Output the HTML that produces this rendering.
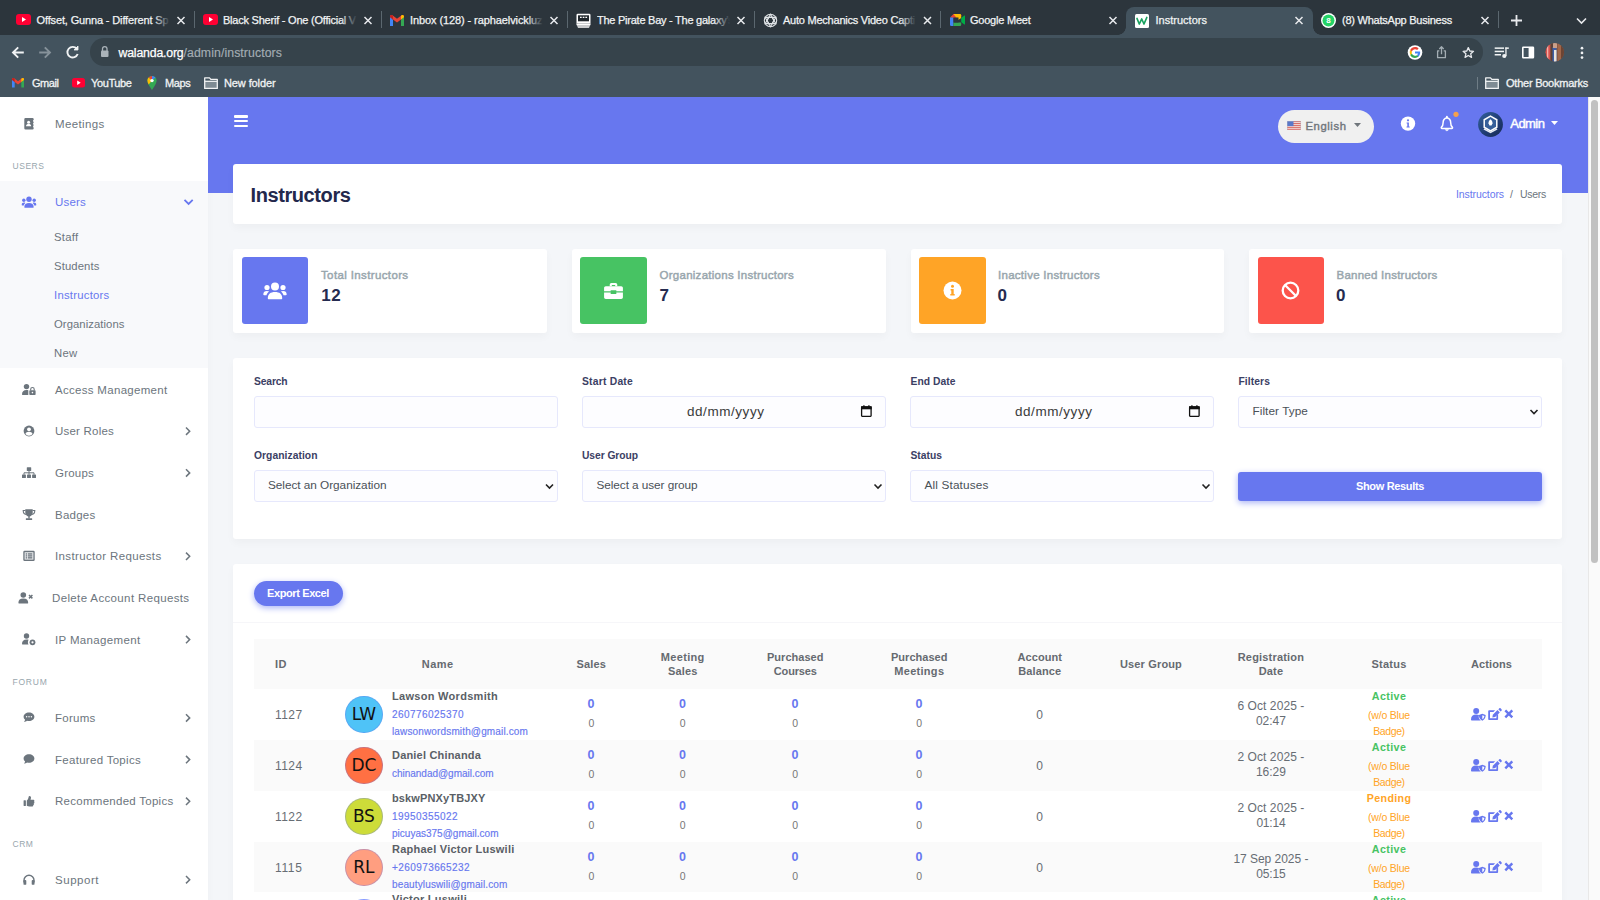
<!DOCTYPE html>
<html lang="en">
<head>
<meta charset="utf-8">
<title>Instructors</title>
<style>
*{box-sizing:border-box;margin:0;padding:0}
html,body{width:1600px;height:900px;overflow:hidden;background:#f4f6f9;font-family:"Liberation Sans",Arial,sans-serif;color:#6c757d}
.abs,.abs *{position:absolute}
#root{position:relative;width:1600px;height:900px;overflow:hidden}
.t{position:absolute;white-space:nowrap;line-height:1}
/* ===== browser chrome ===== */
#tabstrip{left:0;top:0;width:1600px;height:35px;background:#2c353c}
#toolbar{left:0;top:35px;width:1600px;height:62px;background:#43535e}
#omni{left:90px;top:38px;width:1393px;height:28px;border-radius:14px;background:#36434b}
.tabt{font-size:11px;color:#f1f3f4;top:15px;-webkit-text-stroke:.25px #f1f3f4}
.bm{font-size:11px;color:#f1f3f4;top:78px;-webkit-text-stroke:.3px #f1f3f4}
.sep{top:11px;width:1px;height:17px;background:#5b676f}
/* ===== page ===== */
#sidebar{left:0;top:97px;width:208px;height:803px;background:#fff;box-shadow:0 4px 8px rgba(0,0,0,.03)}
#sbactive{left:0;top:181px;width:208px;height:187px;background:#f8f9fb}
#hero{left:208px;top:97px;width:1380px;height:96px;background:#6777ef}
#sbar{left:1588px;top:97px;width:12px;height:803px;background:#fafafa;border-left:1px solid #e8e8e8}
#thumb{left:1591px;top:100px;width:7px;height:463px;border-radius:4px;background:#c1c1c1}
.card{background:#fff;border-radius:3px;box-shadow:0 4px 8px rgba(0,0,0,.03)}
.mi{font-size:11.500px;color:#6c757d;margin-top:1.200px}
.sh{font-size:8.5px;letter-spacing:1.3px;color:#98a6ad;font-weight:400}
.sub{font-size:11.300px;color:#6c757d;margin-top:1.200px}
.sb6{font-weight:400;-webkit-text-stroke:.35px currentColor}
.sl{font-size:11.5px;font-weight:400;color:#98a6ad;-webkit-text-stroke:.45px #98a6ad}
.fl{font-size:10.300px;font-weight:700;color:#3b4064;margin-top:1.200px}
.inp{width:304px;height:31.500px;border:1px solid #e6e8fc;border-radius:3px;background:#fdfdff}
.dt{font-size:13.500px;color:#3a3a3a}
.st{font-size:11.800px;color:#495057;margin-top:.600px}
.th{font-size:11px;font-weight:700;color:#666a70;margin-top:.850px}
.td{font-size:12px;color:#676d74;margin-top:.800px}
.nm{font-size:11px;font-weight:700;color:#5a5f66;margin-top:.850px}
.lk{font-size:10px;color:#6777ef;-webkit-text-stroke:.15px #6777ef;margin-top:.400px}
.zb{font-size:12.500px;font-weight:700;color:#6777ef}
.zs{font-size:10.500px;color:#777}
.stt{font-size:10.700px;font-weight:700;margin-top:1.100px}
.bg{font-size:10.500px;color:#ffa426}
.av{font-family:"DejaVu Sans","Liberation Sans",sans-serif;font-size:17px;color:#111;letter-spacing:-.2px}
.sn{font-size:17px;font-weight:700;color:#252b50}
</style>
</head>
<body>
<div id="root">
<div class="abs" id="chrome" style="left:0;top:0;width:1600px;height:97px">
<div id="tabstrip"></div>
<div id="toolbar"></div>
<!-- active tab -->
<div style="left:1126px;top:7px;width:187px;height:28px;background:#43535e;border-radius:8px 8px 0 0"></div>
<div style="left:1118px;top:27px;width:8px;height:8px;background:radial-gradient(circle at 0 0,rgba(0,0,0,0) 7.5px,#43535e 8px)"></div>
<div style="left:1313px;top:27px;width:8px;height:8px;background:radial-gradient(circle at 100% 0,rgba(0,0,0,0) 7.5px,#43535e 8px)"></div>
<!-- tab separators -->
<div class="sep" style="left:194px"></div><div class="sep" style="left:381px"></div><div class="sep" style="left:567px"></div><div class="sep" style="left:754px"></div><div class="sep" style="left:940px"></div><div class="sep" style="left:1498px"></div>
<!-- favicons -->
<svg style="left:16px;top:14px" width="15" height="11" viewBox="0 0 15 11"><rect width="15" height="11" rx="3" fill="#ff0033"/><path d="M6 3l4 2.5L6 8z" fill="#fff"/></svg>
<svg style="left:203px;top:14px" width="15" height="11" viewBox="0 0 15 11"><rect width="15" height="11" rx="3" fill="#ff0033"/><path d="M6 3l4 2.5L6 8z" fill="#fff"/></svg>
<svg style="left:390px;top:15px" width="14" height="11" viewBox="0 0 14 11"><path d="M0 1.5V11h3V4.5z" fill="#4285f4"/><path d="M14 1.5V11h-3V4.5z" fill="#34a853"/><path d="M0 1.5C0 .3 1.4-.4 2.4.3L7 3.8 11.600.3C12.600-.4 14 .3 14 1.500L11 4.500 7 7.500 3 4.500z" fill="#ea4335"/><path d="M11 1v3.500l3-2.300V1.500C14 .3 12.600-.400 11.600.3z" fill="#fbbc04"/><path d="M3 1v3.500L0 2.200V1.500C0 .3 1.400-.400 2.400.3z" fill="#c5221f"/></svg>
<svg style="left:576px;top:13px" width="15" height="15" viewBox="0 0 15 15"><rect x=".500" y=".800" width="14" height="9.700" rx="1.300" fill="#fff"/><rect x="2" y="2.300" width="11" height="6" fill="#20272c"/><rect x="4" y="3.700" width="1.700" height="1.300" fill="#fff"/><rect x="6.700" y="3.700" width="1.700" height="1.300" fill="#fff"/><rect x="9.400" y="3.700" width="1.700" height="1.300" fill="#fff"/><path d="M0 10.500h15l-1 2.300H1z" fill="#fff"/><path d="M1.200 13.300h12.600l-.8 1.400H2z" fill="#fff"/></svg>
<svg style="left:763px;top:13px" width="15" height="15" viewBox="0 0 15 15"><g fill="none" stroke="#dfe3e6" stroke-width="1.100"><circle cx="7.500" cy="7.500" r="6.200"/><path d="M7.500 1.300L4 7.500l3.500 6.200L11 7.500z"/><path d="M2.100 4.400h7l3.800 6.200H5.800z"/><path d="M12.900 4.400H5.800L2.100 10.600h7z"/></g></svg>
<svg style="left:950px;top:14px" width="15" height="12" viewBox="0 0 15 12"><path d="M0 3.500L3.500 0H10v4.500z" fill="#ea4335"/><path d="M0 3.500h3.500V12H1.200A1.200 1.200 0 0 1 0 10.800z" fill="#4285f4"/><path d="M3.500 0H10a1.200 1.200 0 0 1 1.200 1.200V4l-3 2z" fill="#fbbc04"/><path d="M3.500 8.500H11.200v2.300A1.200 1.200 0 0 1 10 12H3.500z" fill="#34a853"/><path d="M11.200 4l3-2.400c.4-.3.800-.1.800.4v8c0 .5-.4.700-.8.400l-3-2.400z" fill="#00ac47"/><rect x="3.500" y="3.500" width="5" height="5" fill="#2c353c"/></svg>
<svg style="left:1135px;top:14px" width="14" height="14" viewBox="0 0 14 14"><rect width="14" height="14" rx="1.500" fill="#fff"/><path d="M2 4.500l2.300 5.500 2.400-5 2.300 5 2.800-6.500" fill="none" stroke="#1aa260" stroke-width="1.700" stroke-linejoin="round" stroke-linecap="round"/></svg>
<svg style="left:1321px;top:13px" width="15" height="15" viewBox="0 0 15 15"><circle cx="7.500" cy="7.500" r="7.500" fill="#fff"/><circle cx="7.500" cy="7.500" r="6" fill="#25d366"/><text x="7.500" y="10.300" font-size="8" font-weight="700" fill="#fff" text-anchor="middle" font-family="Liberation Sans, sans-serif" style="position:static">8</text></svg>
<!-- tab titles -->
<div class="t tabt" style="left:36.500px;letter-spacing:-0.141px">Offset, Gunna - Different Sp</div>
<div class="t tabt" style="left:223px;letter-spacing:-0.227px">Black Sherif - One (Official V</div>
<div class="t tabt" style="left:410px;letter-spacing:-0.094px">Inbox (128) - raphaelvickluz</div>
<div class="t tabt" style="left:597px;width:132.500px;overflow:hidden;letter-spacing:-0.250px">The Pirate Bay - The galaxy's</div>
<div class="t tabt" style="left:783px;letter-spacing:-0.231px">Auto Mechanics Video Capti</div>
<div class="t tabt" style="left:970px;letter-spacing:-0.226px">Google Meet</div>
<div class="t tabt" style="left:1155.500px;letter-spacing:0.013px">Instructors</div>
<div class="t tabt" style="left:1342px;letter-spacing:-0.235px">(8) WhatsApp Business</div>
<!-- fades -->
<div style="left:153.5px;top:10px;width:16px;height:20px;background:linear-gradient(90deg,rgba(44,53,60,0),#2c353c)"></div>
<div style="left:340.5px;top:10px;width:16px;height:20px;background:linear-gradient(90deg,rgba(44,53,60,0),#2c353c)"></div>
<div style="left:526.5px;top:10px;width:16px;height:20px;background:linear-gradient(90deg,rgba(44,53,60,0),#2c353c)"></div>
<div style="left:713.5px;top:10px;width:16px;height:20px;background:linear-gradient(90deg,rgba(44,53,60,0),#2c353c)"></div>
<div style="left:900px;top:10px;width:16px;height:20px;background:linear-gradient(90deg,rgba(44,53,60,0),#2c353c)"></div>
<!-- close x -->
<svg style="left:0;top:0" width="1600" height="35" viewBox="0 0 1600 35"><g stroke="#e8eaed" stroke-width="1.500" fill="none"><path id="cx" d="M177.500 17l7 7m0-7l-7 7"/><path d="M364.500 17l7 7m0-7l-7 7"/><path d="M550.500 17l7 7m0-7l-7 7"/><path d="M737.500 17l7 7m0-7l-7 7"/><path d="M924 17l7 7m0-7l-7 7"/><path d="M1109.500 17l7 7m0-7l-7 7"/><path d="M1295.500 17l7 7m0-7l-7 7"/><path d="M1481.500 17l7 7m0-7l-7 7"/><path d="M1516.500 15v11m-5.500-5.500h11" stroke-width="1.800"/><path d="M1577 18.500l4.500 4.500 4.500-4.500" stroke-width="1.600"/></g></svg>
<!-- toolbar -->
<div id="omni"></div>
<svg style="left:0;top:35px" width="1600" height="34" viewBox="0 0 1600 34"><g stroke="#f1f3f4" stroke-width="1.900" fill="none" stroke-linecap="butt"><path d="M23.800 17.500H13.500m4.700-5.200l-5.200 5.200 5.200 5.200"/><path d="M39.200 17.500h10.300m-4.700-5.200l5.200 5.200-5.200 5.200" stroke="#86929a"/><path d="M76.800 13.800a5.300 5.300 0 1 0 .9 5.200"/><path d="M78 11v4h-4z" fill="#f1f3f4" stroke-width=".800"/></g>
<g fill="#aab3b9"><rect x="101" y="15.500" width="7.500" height="6.500" rx="1"/><path d="M102.500 16v-2.200a2.250 2.250 0 0 1 4.500 0V16" fill="none" stroke="#aab3b9" stroke-width="1.300"/></g>
</svg>
<div class="t" style="left:118.500px;top:46.500px;font-size:12.300px;color:#fff;-webkit-text-stroke:.25px #fff;letter-spacing:-0.182px">walanda.org</div><div class="t" style="left:183.500px;top:46.500px;font-size:12.300px;color:#a3adb3;-webkit-text-stroke:.15px #a3adb3;letter-spacing:0.081px">/admin/instructors</div>
<!-- right toolbar icons -->
<svg style="left:1400px;top:35px" width="200" height="34" viewBox="0 0 200 34">
<circle cx="15" cy="17.500" r="7.300" fill="#fff"/>
<g transform="translate(15 17.500) scale(1.200) translate(-15 -17.500)"><path d="M19.300 17.600c0-.35-.03-.6-.1-.9H15v1.700h2.450c-.05.400-.32 1.050-.9 1.480l1.400 1.080c.83-.77 1.350-1.900 1.350-3.360z" fill="#4285f4"/><path d="M15 22c1.200 0 2.200-.4 2.950-1.080l-1.400-1.080c-.38.260-.88.440-1.550.440-1.180 0-2.180-.780-2.540-1.860l-1.450 1.120C11.740 21 13.250 22 15 22z" fill="#34a853"/><path d="M12.460 18.420a2.800 2.800 0 0 1 0-1.840l-1.450-1.120a4.500 4.500 0 0 0 0 4.080z" fill="#fbbc05"/><path d="M15 14.720c.84 0 1.400.36 1.730.66l1.260-1.230C17.200 13.430 16.200 13 15 13c-1.750 0-3.260 1-3.990 2.460l1.450 1.120c.36-1.080 1.360-1.860 2.540-1.860z" fill="#ea4335"/></g>
<g fill="none" stroke="#a4aeb4" stroke-width="1.300" stroke-linejoin="round"><path d="M39.300 15.800h-1.700v6.900h7.800v-6.900h-1.700"/><path d="M41.500 19.200v-7.200m-2.200 2l2.200-2.200 2.200 2.200"/></g>
<path d="M68.300 12.600l1.500 3.400 3.700.35-2.800 2.450.85 3.600-3.250-1.950-3.250 1.950.85-3.600-2.800-2.450 3.700-.35z" fill="none" stroke="#e8eaed" stroke-width="1.300" stroke-linejoin="round"/>
<g fill="#f1f3f4"><rect x="94.700" y="12.400" width="9.300" height="1.500"/><rect x="94.700" y="15.700" width="9.300" height="1.500"/><rect x="94.700" y="19" width="6.300" height="1.500"/><circle cx="104.300" cy="21" r="2.100"/><rect x="105.300" y="12.400" width="1.300" height="8.600"/><rect x="105.300" y="12.400" width="3.500" height="1.500"/></g>
<rect x="122.800" y="12.300" width="10.600" height="10.400" rx=".500" fill="none" stroke="#fff" stroke-width="1.600"/><rect x="128.600" y="12.300" width="4.800" height="10.400" fill="#fff"/>
<defs><clipPath id="avc"><circle cx="154.800" cy="17.300" r="9.200"/></clipPath></defs>
<g clip-path="url(#avc)"><rect x="145" y="8" width="20" height="20" fill="#8a5a44"/><rect x="145" y="8" width="5.500" height="20" fill="#d9534f"/><rect x="147" y="8" width="1.300" height="20" fill="#f3b0a8"/><rect x="150.500" y="8" width="3" height="20" fill="#5a4036"/><rect x="152.500" y="12" width="4" height="16" fill="#3d5fa8"/><rect x="154" y="15" width="2.500" height="13" fill="#e9e4de"/><rect x="153" y="8" width="4" height="5" fill="#c9a08a"/><rect x="158" y="8" width="3" height="20" fill="#a0664a"/><rect x="161" y="8" width="4" height="20" fill="#6d4433"/></g>
<circle cx="182" cy="13.200" r="1.350" fill="#f1f3f4"/><circle cx="182" cy="17.900" r="1.350" fill="#f1f3f4"/><circle cx="182" cy="22.600" r="1.350" fill="#f1f3f4"/>
</svg>
<!-- bookmarks -->
<svg style="left:0;top:69px" width="1600" height="28" viewBox="0 0 1600 28">
<g transform="translate(12,9)"><path d="M0 1.300V9.500h2.700V4z" fill="#4285f4"/><path d="M12 1.300V9.500H9.300V4z" fill="#34a853"/><path d="M0 1.300C0 .2 1.200-.3 2.100.3L6 3.300 9.900.3C10.800-.3 12 .2 12 1.300L9.300 4 6 6.500 2.700 4z" fill="#ea4335"/><path d="M9.300.8V4L12 1.900v-.6C12 .2 10.800-.3 9.900.3z" fill="#fbbc04"/><path d="M2.700.8V4L0 1.900v-.6C0 .2 1.200-.3 2.100.3z" fill="#c5221f"/></g>
<g transform="translate(72,9)"><rect width="13" height="9.500" rx="2.500" fill="#ff0033"/><path d="M5.200 2.600l3.500 2.150-3.500 2.150z" fill="#fff"/></g>
<g transform="translate(147,7)"><path d="M5 0a4.600 4.600 0 0 0-4.600 4.600C.4 8 5 14 5 14s4.600-6 4.600-9.400A4.600 4.600 0 0 0 5 0z" fill="#34a853"/><path d="M5 0A4.600 4.600 0 0 0 1.500 1.600L5 4.600z" fill="#ea4335"/><path d="M5 0v4.600l3.500-3A4.600 4.600 0 0 0 5 0z" fill="#4285f4"/><path d="M.4 4.600c0 1.200.5 2.600 1.300 4L5 4.600 1.500 1.600A4.600 4.600 0 0 0 .4 4.600z" fill="#fbbc04"/><circle cx="5" cy="4.600" r="1.700" fill="#fff"/></g>
<rect x="205" y="12.500" width="12" height="6.500" fill="#7e8b93"/><rect x="1486" y="12.500" width="12" height="6.500" fill="#7e8b93"/><g fill="none" stroke="#f1f3f4" stroke-width="1.300" stroke-linejoin="round"><path d="M204.700 8.900h4.800l1.300 1.500h6.500v9h-12.600z"/><path d="M204.700 12.300h12.600"/><path d="M1485.700 8.900h4.800l1.300 1.500h6.500v9h-12.600z"/><path d="M1485.700 12.300h12.600"/></g>
<rect x="1477" y="8" width="1" height="12.500" fill="#6f7d86"/>
</svg>
<div class="t bm" style="left:32px;letter-spacing:-0.447px">Gmail</div>
<div class="t bm" style="left:91px;letter-spacing:-0.391px">YouTube</div>
<div class="t bm" style="left:165px;letter-spacing:-0.352px">Maps</div>
<div class="t bm" style="left:224px;letter-spacing:-0.108px">New folder</div>
<div class="t bm" style="left:1506px;letter-spacing:-0.240px">Other Bookmarks</div>
</div>

<div class="abs" id="sb" style="left:0;top:0;width:208px;height:900px">
<div id="sidebar"></div>
<div id="sbactive"></div>
<!-- icons -->
<svg style="left:0;top:97px" width="208" height="803" viewBox="0 97 208 803">
<g fill="#6c757d">
<!-- meetings: address book -->
<path d="M25.500 118h7a1.200 1.200 0 0 1 1.200 1.200v9.100a1.200 1.200 0 0 1-1.200 1.200h-7a1.200 1.200 0 0 1-1.200-1.200v-9.100a1.200 1.200 0 0 1 1.200-1.200z"/>
<circle cx="28.600" cy="122.200" r="1.500" fill="#fff"/><path d="M26 126.200c0-1.700 1.200-2.200 2.600-2.200s2.600.500 2.600 2.200z" fill="#fff"/>
<rect x="33.200" y="120" width="1.200" height="1.800" fill="#fff"/><rect x="33.200" y="122.800" width="1.200" height="1.800" fill="#fff"/><rect x="33.200" y="125.600" width="1.200" height="1.800" fill="#fff"/>
</g>
<!-- users active -->
<g fill="#6777ef">
<circle cx="29" cy="199.300" r="2.700"/><path d="M24.300 207.300c0-3 1.800-4.300 4.700-4.300s4.700 1.300 4.700 4.300c0 .300-.200.500-.500.500h-8.400c-.300 0-.500-.200-.500-.500z"/>
<circle cx="23.800" cy="200.300" r="1.700"/><path d="M21.700 205c0-1.700.900-2.400 2.300-2.400.500 0 1 .100 1.300.400-.900.800-1.400 1.600-1.500 2.500h-1.600c-.300 0-.500-.200-.500-.500z"/>
<circle cx="34.200" cy="200.300" r="1.700"/><path d="M36.300 205c0-1.700-.900-2.400-2.300-2.400-.500 0-1 .100-1.300.400.900.800 1.400 1.600 1.500 2.500h1.600c.300 0 .500-.200.500-.500z"/>
<path d="M184.500 199.800l4.100 4.100 4.100-4.100" fill="none" stroke="#6777ef" stroke-width="1.800"/>
</g>
<g fill="#6c757d">
<!-- access mgmt: user lock -->
<circle cx="26.500" cy="386.600" r="2.700"/><path d="M22 394.500c0-3 1.600-4.600 4.500-4.600.700 0 1.300.100 1.800.300v4.800h-5.800c-.300 0-.500-.200-.500-.500z"/>
<rect x="29.300" y="390.300" width="6.300" height="4.700" rx=".700"/><path d="M30.700 390.500v-1.300a1.750 1.750 0 0 1 3.500 0v1.300" fill="none" stroke="#6c757d" stroke-width="1.100"/><circle cx="32.450" cy="392.600" r=".800" fill="#fff"/>
<!-- user roles: user-circle -->
<circle cx="29" cy="431" r="5.400"/><circle cx="29" cy="429.300" r="1.900" fill="#fff"/><path d="M25.400 434c.500-1.500 1.800-2.200 3.600-2.200s3.100.700 3.600 2.200a4.600 4.600 0 0 1-7.200 0z" fill="#fff"/>
<!-- groups: sitemap -->
<rect x="26.800" y="467.300" width="4.400" height="3.700" rx=".500"/><rect x="22" y="474.600" width="3.900" height="3.400" rx=".500"/><rect x="27.050" y="474.600" width="3.900" height="3.400" rx=".500"/><rect x="32.100" y="474.600" width="3.900" height="3.400" rx=".500"/>
<path d="M29 471v3.600M24 474.600v-1.800h10v1.800" fill="none" stroke="#6c757d" stroke-width="1"/>
<!-- badges: trophy -->
<path d="M25.300 509.300h7.400v3.200c0 2.300-1.500 4-3.700 4s-3.700-1.700-3.700-4z"/><path d="M25.500 510.500h-2.300c0 2.300 1 3.700 3 4M32.500 510.500h2.300c0 2.300-1 3.700-3 4" fill="none" stroke="#6c757d" stroke-width="1.100"/><rect x="28.300" y="516" width="1.400" height="2.500"/><rect x="25.800" y="518.300" width="6.400" height="1.700" rx=".400"/>
<!-- instructor requests: list-alt -->
<rect x="23.300" y="550.800" width="11.400" height="10.200" rx="1.200"/><rect x="24.600" y="552.200" width="8.800" height="7.400" fill="#e9ebed"/><rect x="25.700" y="553.300" width="1.500" height="1.300"/><rect x="25.700" y="555.250" width="1.500" height="1.300"/><rect x="25.700" y="557.200" width="1.500" height="1.300"/><rect x="28" y="553.300" width="4.300" height="1.300"/><rect x="28" y="555.250" width="4.300" height="1.300"/><rect x="28" y="557.200" width="4.300" height="1.300"/>
<!-- delete account: user-times -->
<circle cx="23.300" cy="595" r="2.800"/><path d="M18.400 603c0-3 1.600-4.400 4.900-4.400s4.900 1.400 4.900 4.400c0 .300-.200.500-.500.500h-8.800c-.300 0-.500-.200-.500-.500z"/><path d="M29 595l3.400 3.400m0-3.400l-3.400 3.400" fill="none" stroke="#6c757d" stroke-width="1.500"/>
<!-- ip: user-cog -->
<circle cx="26.500" cy="636" r="2.700"/><path d="M22 644c0-3 1.600-4.600 4.500-4.600.800 0 1.500.100 2.100.400-.500.800-.700 1.600-.700 2.500 0 .800.200 1.500.600 2.200h-6c-.300 0-.500-.200-.500-.500z"/><circle cx="32.500" cy="642.300" r="2.900"/><circle cx="32.500" cy="642.300" r="1.100" fill="#fff"/>
<!-- forums: comment-dots -->
<path d="M29 712.500c3 0 5.400 1.900 5.400 4.300s-2.400 4.300-5.400 4.300c-.700 0-1.400-.100-2-.300-.700.600-1.800 1.100-3 1.100.600-.600 1-1.400 1.100-2.100-.900-.800-1.500-1.800-1.500-3 0-2.400 2.400-4.300 5.400-4.300z"/><circle cx="26.600" cy="716.800" r=".750" fill="#fff"/><circle cx="29" cy="716.800" r=".750" fill="#fff"/><circle cx="31.400" cy="716.800" r=".750" fill="#fff"/>
<!-- featured: comment -->
<path d="M29 754.200c3 0 5.400 1.900 5.400 4.300s-2.400 4.300-5.400 4.300c-.700 0-1.400-.100-2-.300-.700.600-1.800 1.100-3 1.100.600-.600 1-1.400 1.100-2.100-.900-.800-1.500-1.800-1.500-3 0-2.400 2.400-4.300 5.400-4.300z"/>
<!-- recommended: thumbs-up -->
<rect x="23.600" y="800.300" width="2.300" height="5.700" rx=".400"/><path d="M26.800 800.600c1.300-1 1.600-2.400 1.800-3.600.100-.700.400-1 .900-1 1 0 1.500.800 1.500 1.800 0 .800-.300 1.500-.500 2h2.700c.700 0 1.200.500 1.200 1.100 0 .400-.200.700-.400.900.300.200.400.500.400.800 0 .500-.300.900-.700 1 .100.200.200.400.200.600 0 .500-.300.900-.800 1 .100.100.100.300.100.400 0 .600-.500 1-1.200 1h-2.500c-1 0-1.900-.300-2.700-.800z"/>
<!-- support: headphones -->
<path d="M24 882.500v-2.300a5 5 0 0 1 10 0v2.300" fill="none" stroke="#6c757d" stroke-width="1.400"/><rect x="23.500" y="880" width="2.800" height="4.800" rx=".900"/><rect x="31.700" y="880" width="2.800" height="4.800" rx=".900"/>
<!-- chevrons -->
<g fill="none" stroke="#6c757d" stroke-width="1.500"><path d="M186 427.500l3.700 3.700-3.700 3.700"/><path d="M186 469.200l3.700 3.700-3.700 3.700"/><path d="M186 552.600l3.700 3.700-3.700 3.700"/><path d="M186 635.900l3.700 3.700-3.700 3.700"/><path d="M186 714.200l3.700 3.700-3.700 3.700"/><path d="M186 755.900l3.700 3.700-3.700 3.700"/><path d="M186 797.600l3.700 3.700-3.700 3.700"/><path d="M186 876l3.700 3.700-3.700 3.700"/></g>
</g>
</svg>
<!-- text -->
<div class="t mi" style="left:55px;top:118px;letter-spacing:0.354px">Meetings</div>
<div class="t sh" style="left:12.500px;top:162px;letter-spacing:0.541px">USERS</div>
<div class="t mi" style="left:55px;top:196px;color:#6777ef;letter-spacing:0.194px">Users</div>
<div class="t sub" style="left:54px;top:231px;letter-spacing:0.294px">Staff</div>
<div class="t sub" style="left:54px;top:260px;letter-spacing:0.113px">Students</div>
<div class="t sub" style="left:54px;top:289px;color:#6777ef;letter-spacing:0.251px">Instructors</div>
<div class="t sub" style="left:54px;top:318px;letter-spacing:0.061px">Organizations</div>
<div class="t sub" style="left:54px;top:347px;letter-spacing:0.297px">New</div>
<div class="t mi" style="left:55px;top:384px;letter-spacing:0.301px">Access Management</div>
<div class="t mi" style="left:55px;top:425px;letter-spacing:0.211px">User Roles</div>
<div class="t mi" style="left:55px;top:467px;letter-spacing:0.214px">Groups</div>
<div class="t mi" style="left:55px;top:509px;letter-spacing:0.247px">Badges</div>
<div class="t mi" style="left:55px;top:550px;letter-spacing:0.357px">Instructor Requests</div>
<div class="t mi" style="left:52px;top:592px;letter-spacing:0.363px">Delete Account Requests</div>
<div class="t mi" style="left:55px;top:634px;letter-spacing:0.347px">IP Management</div>
<div class="t sh" style="left:12.500px;top:678px;letter-spacing:0.766px">FORUM</div>
<div class="t mi" style="left:55px;top:712px;letter-spacing:0.253px">Forums</div>
<div class="t mi" style="left:55px;top:754px;letter-spacing:0.292px">Featured Topics</div>
<div class="t mi" style="left:55px;top:795px;letter-spacing:0.273px">Recommended Topics</div>
<div class="t sh" style="left:12.500px;top:840px;letter-spacing:0.547px">CRM</div>
<div class="t mi" style="left:55px;top:874px;letter-spacing:0.531px">Support</div>
</div>

<div class="abs" id="main" style="left:0;top:0;width:1600px;height:900px">
<div id="hero"></div>
<div id="sbar"></div><div id="thumb"></div>
<!-- hamburger -->
<div style="left:234px;top:115px;width:13.500px;height:2.500px;background:#fff;border-radius:1px"></div>
<div style="left:234px;top:119.800px;width:13.500px;height:2.500px;background:#fff;border-radius:1px"></div>
<div style="left:234px;top:124.500px;width:13.500px;height:2.500px;background:#fff;border-radius:1px"></div>
<!-- language pill -->
<div style="left:1278px;top:110px;width:96px;height:33px;border-radius:17px;background:#f0f0f0"></div>
<svg style="left:1287px;top:120.700px" width="14" height="9.300" viewBox="0 0 14 10" preserveAspectRatio="none"><rect width="14" height="10" fill="#f3d9d6"/><g fill="#d86b64"><rect y="0" width="14" height="1.100"/><rect y="2.200" width="14" height="1.100"/><rect y="4.400" width="14" height="1.100"/><rect y="6.600" width="14" height="1.100"/><rect y="8.800" width="14" height="1.200"/></g><rect width="6.500" height="5.500" fill="#5a78c8"/><rect width="14" height="10" fill="none" stroke="#b8b8c8" stroke-width=".800"/></svg>
<div class="t" style="left:1305.500px;top:120.500px;font-size:11.300px;font-weight:400;color:#70767c;-webkit-text-stroke:.4px #70767c;letter-spacing:0.562px">English</div>
<svg style="left:1354px;top:122.800px" width="7" height="4" viewBox="0 0 7 4"><path d="M0 0h7L3.500 4z" fill="#70767c"/></svg>
<!-- info -->
<svg style="left:1400px;top:116px" width="16" height="16" viewBox="0 0 16 16"><circle cx="8" cy="7.600" r="7.200" fill="#fff"/><circle cx="8" cy="4.300" r="1.100" fill="#6777ef"/><path d="M6.600 6.400h2.300v4h.8v1.200H6.500v-1.200h.8V7.600h-.7z" fill="#6777ef"/></svg>
<!-- bell -->
<svg style="left:1436px;top:110px" width="26" height="26" viewBox="0 0 26 26"><path d="M10.900 7.700c-2.300.500-3.800 2.300-3.800 5 0 2.500-.700 3.600-1.600 4.400-.500.500-.200 1.300.500 1.300h9.800c.700 0 1-.800.500-1.300-.900-.800-1.600-1.900-1.600-4.400 0-2.700-1.500-4.500-3.800-5z" fill="none" stroke="#fff" stroke-width="1.500" stroke-linejoin="round"/><path d="M10.900 7.500v-.7" stroke="#fff" stroke-width="1.900" stroke-linecap="round"/><path d="M9.300 19.600a1.700 1.700 0 0 0 3.200 0z" fill="#fff" stroke="#fff" stroke-width=".600"/><circle cx="20" cy="4.300" r="2.600" fill="#f5a04c"/></svg>
<!-- avatar -->
<svg style="left:1478.300px;top:112.300px" width="25" height="25" viewBox="0 0 25 25"><defs><linearGradient id="avg" x1="0" y1="0" x2="1" y2="1"><stop offset="0" stop-color="#34639c"/><stop offset=".55" stop-color="#1f3c74"/><stop offset="1" stop-color="#172a55"/></linearGradient></defs><circle cx="12.500" cy="12.500" r="12.400" fill="url(#avg)"/><path d="M12.500 4.200l6.300 3.600v7.400l-6.300 3.600-6.300-3.600V7.800z" fill="#355f99" stroke="#fff" stroke-width="1.500"/><path d="M12.500 7.300c1.600 1.100 2 2.600 2 4l-1 2.200h-2l-1-2.200c0-1.400.4-2.900 2-4z" fill="#fff"/><path d="M6.500 16.300l6 3.300 6-3.300 1 1.200-7 3.800-7-3.800z" fill="#e6ecf5"/></svg>
<div class="t" style="left:1510.300px;top:117px;font-size:13px;font-weight:400;color:#fff;-webkit-text-stroke:.45px #fff;letter-spacing:-0.572px">Admin</div>
<svg style="left:1551px;top:121px" width="7" height="4" viewBox="0 0 7 4"><path d="M0 0h7L3.500 4z" fill="#fff"/></svg>
<!-- title card -->
<div class="card" style="left:233px;top:164px;width:1329px;height:60px"></div>
<div class="t" style="left:250.500px;top:185px;font-size:20px;font-weight:700;color:#23284c;letter-spacing:-0.406px">Instructors</div>
<div class="t" style="left:1456px;top:189px;font-size:10.500px;color:#6777ef;letter-spacing:-0.092px">Instructors</div>
<div class="t" style="left:1510px;top:189px;font-size:10.500px;color:#6c757d">/</div>
<div class="t" style="left:1520px;top:189px;font-size:10.500px;color:#6c757d;letter-spacing:-0.284px">Users</div>
<!-- stat cards -->
<div class="card" style="left:233px;top:249px;width:314px;height:83.500px"></div>
<div class="card" style="left:572px;top:249px;width:313.500px;height:83.500px"></div>
<div class="card" style="left:910.500px;top:249px;width:313.500px;height:83.500px"></div>
<div class="card" style="left:1249px;top:249px;width:313px;height:83.500px"></div>
<div style="left:241.500px;top:257.300px;width:66.500px;height:66.700px;border-radius:3px;background:#6777ef"></div>
<div style="left:580px;top:257.300px;width:66.500px;height:66.700px;border-radius:3px;background:#47c363"></div>
<div style="left:919px;top:257.300px;width:66.500px;height:66.700px;border-radius:3px;background:#ffa426"></div>
<div style="left:1257.500px;top:257.300px;width:66.500px;height:66.700px;border-radius:3px;background:#fc544b"></div>
<!-- stat icons -->
<svg style="left:262px;top:281px" width="26" height="20" viewBox="0 0 26 20"><g fill="#fff"><circle cx="13" cy="5.400" r="4"/><path d="M5.800 17.300c0-4.300 2.700-6.300 7.200-6.300s7.200 2 7.200 6.300c0 .600-.400 1-1 1H6.800c-.600 0-1-.400-1-1z"/><circle cx="5" cy="6.500" r="2.600"/><path d="M1.300 13.500c0-2.500 1.400-3.600 3.600-3.600.900 0 1.700.200 2.300.600-1.500 1-2.400 2.300-2.700 3.800H2.100c-.400 0-.8-.300-.8-.8z"/><circle cx="21" cy="6.500" r="2.600"/><path d="M24.700 13.500c0-2.500-1.400-3.600-3.600-3.600-.900 0-1.700.200-2.300.600 1.500 1 2.400 2.300 2.700 3.800h2.400c.400 0 .8-.300.800-.8z"/></g></svg>
<svg style="left:603.700px;top:283px" width="19" height="16" viewBox="0 0 20 17"><g fill="#fff"><path d="M6 3.500V1.800C6 .8 6.800 0 7.800 0h4.400c1 0 1.800.8 1.800 1.800v1.700h-2.200V2.200H8.200v1.300z"/><path d="M1.800 3.500h16.400c1 0 1.800.8 1.800 1.800v3.500h-7v-1H7v1H0V5.300c0-1 .8-1.800 1.800-1.800z"/><path d="M0 10.200h7v1.500h6v-1.500h7v5c0 1-.8 1.800-1.800 1.800H1.800c-1 0-1.800-.8-1.800-1.800z"/></g></svg>
<svg style="left:943px;top:281px" width="19" height="19" viewBox="0 0 19 19"><circle cx="9.500" cy="9.500" r="9" fill="#fff"/><circle cx="9.500" cy="5.300" r="1.500" fill="#ffa426"/><path d="M7.600 8h3.100v5h1v1.600H7.300V13h1V9.600h-.7z" fill="#ffa426"/></svg>
<svg style="left:1281px;top:281px" width="19" height="19" viewBox="0 0 19 19"><circle cx="9.500" cy="9.500" r="7.800" fill="none" stroke="#fff" stroke-width="2.300"/><path d="M4 4l11 11" stroke="#fff" stroke-width="2.300"/></svg>
<!-- stat text -->
<div class="t sl" style="left:321px;top:270px;letter-spacing:0.372px">Total Instructors</div>
<div class="t sn" style="left:321.200px;top:287px;letter-spacing:0.539px">12</div>
<div class="t sl" style="left:659.500px;top:270px;letter-spacing:0.266px">Organizations Instructors</div>
<div class="t sn" style="left:659.500px;top:287px;letter-spacing:0.031px">7</div>
<div class="t sl" style="left:998px;top:270px;letter-spacing:0.274px">Inactive Instructors</div>
<div class="t sn" style="left:997.500px;top:287px;letter-spacing:1.031px">0</div>
<div class="t sl" style="left:1336.500px;top:270px;letter-spacing:0.248px">Banned Instructors</div>
<div class="t sn" style="left:1336px;top:287px;letter-spacing:1.031px">0</div>
<div class="card" style="left:233px;top:358px;width:1329px;height:181px"></div>
<div class="t fl" style="left:254px;top:376px;letter-spacing:-0.143px">Search</div>
<div class="t fl" style="left:582px;top:376px;letter-spacing:0.236px">Start Date</div>
<div class="t fl" style="left:910.500px;top:376px;letter-spacing:0.045px">End Date</div>
<div class="t fl" style="left:1238.500px;top:376px;letter-spacing:0.085px">Filters</div>
<div class="t fl" style="left:254px;top:450px;letter-spacing:0.047px">Organization</div>
<div class="t fl" style="left:582px;top:450px;letter-spacing:-0.066px">User Group</div>
<div class="t fl" style="left:910.500px;top:450px;letter-spacing:0.003px">Status</div>
<div class="inp" style="left:254px;top:396px"></div>
<div class="inp" style="left:582px;top:396px"></div>
<div class="inp" style="left:910px;top:396px;width:303.500px"></div>
<div class="inp" style="left:1238px;top:396px;width:303.500px"></div>
<div class="inp" style="left:254px;top:470px"></div>
<div class="inp" style="left:582px;top:470px"></div>
<div class="inp" style="left:910px;top:470px;width:303.500px"></div>
<div class="t dt" style="left:687px;top:405px;letter-spacing:0.548px">dd/mm/yyyy</div>
<div class="t dt" style="left:1015px;top:405px;letter-spacing:0.548px">dd/mm/yyyy</div>
<div class="t st" style="left:1252.500px;top:405px;letter-spacing:0.058px">Filter Type</div>
<div class="t st" style="left:268px;top:479.600px;letter-spacing:-0.039px">Select an Organization</div>
<div class="t st" style="left:596.500px;top:479.600px;letter-spacing:-0.069px">Select a user group</div>
<div class="t st" style="left:924.500px;top:479.600px;letter-spacing:0.142px">All Statuses</div>
<svg style="left:0;top:396px" width="1600" height="110" viewBox="0 396 1600 110">
<g fill="none" stroke="#222" stroke-width="1.600"><path d="M1530.500 410l3.500 3.500 3.500-3.500"/><path d="M546 484.500l3.500 3.500 3.500-3.500"/><path d="M874.500 484.500l3.500 3.500 3.500-3.500"/><path d="M1202.500 484.500l3.500 3.500 3.500-3.500"/></g>
<g fill="none" stroke="#111" stroke-width="1.300"><rect x="861.600" y="407" width="9.500" height="9.300" rx=".500"/><rect x="1189.600" y="407" width="9.500" height="9.300" rx=".500"/></g>
<g fill="#111"><rect x="861" y="406.300" width="10.700" height="3"/><rect x="863.200" y="405.300" width="1.400" height="2"/><rect x="868.200" y="405.300" width="1.400" height="2"/><rect x="1189" y="406.300" width="10.700" height="3"/><rect x="1191.200" y="405.300" width="1.400" height="2"/><rect x="1196.200" y="405.300" width="1.400" height="2"/></g>
</svg>
<div style="left:1238px;top:472px;width:303.500px;height:28.500px;border-radius:3px;background:#6777ef;box-shadow:0 2px 6px #acb5f6"></div>
<div class="t" style="left:1356px;top:481px;font-size:11px;font-weight:700;color:#fff;letter-spacing:-0.344px">Show Results</div>

<div class="card" style="left:233px;top:564px;width:1329px;height:400px"></div>
<div style="left:233px;top:622px;width:1329px;height:1px;background:#f6f6f9"></div>
<div style="left:254px;top:581px;width:89px;height:24.500px;border-radius:13px;background:#6777ef;box-shadow:0 2px 6px #acb5f6"></div>
<div class="t" style="left:267px;top:588px;font-size:11px;font-weight:700;color:#fff;letter-spacing:-0.387px">Export Excel</div>
<div style="left:254px;top:638.500px;width:1287.500px;height:50px;background:#fafafa"></div>
<div style="left:254px;top:739.5px;width:1287.500px;height:51.0px;background:#fafafa"></div>
<div style="left:254px;top:841.5px;width:1287.500px;height:50.8px;background:#fafafa"></div>
<div class="t th" style="left:275px;top:658px;letter-spacing:0.500px">ID</div>
<div class="t th" style="left:421.7px;top:658.0px;letter-spacing:0.508px">Name</div>
<div class="t th" style="left:576.6px;top:658.0px;letter-spacing:0.150px">Sales</div>
<div class="t th" style="left:660.7px;top:651.0px;letter-spacing:0.348px">Meeting</div>
<div class="t th" style="left:668.0px;top:665.0px;letter-spacing:0.150px">Sales</div>
<div class="t th" style="left:767.0px;top:651.0px;letter-spacing:0.028px">Purchased</div>
<div class="t th" style="left:773.8px;top:665.0px;letter-spacing:-0.147px">Courses</div>
<div class="t th" style="left:891.0px;top:651.0px;letter-spacing:0.028px">Purchased</div>
<div class="t th" style="left:894.3px;top:665.0px;letter-spacing:0.289px">Meetings</div>
<div class="t th" style="left:1017.5px;top:651.0px;letter-spacing:0.071px">Account</div>
<div class="t th" style="left:1018.2px;top:665.0px;letter-spacing:0.114px">Balance</div>
<div class="t th" style="left:1120.0px;top:658.0px;letter-spacing:0.148px">User Group</div>
<div class="t th" style="left:1237.7px;top:651.0px;letter-spacing:0.193px">Registration</div>
<div class="t th" style="left:1258.7px;top:665.0px;letter-spacing:0.164px">Date</div>
<div class="t th" style="left:1371.5px;top:658.0px;letter-spacing:0.229px">Status</div>
<div class="t th" style="left:1471.0px;top:658.0px;letter-spacing:0.094px">Actions</div>
<div class="t td" style="left:275px;top:707.9px;letter-spacing:0.422px">1127</div>
<div style="left:345px;top:695.6px;width:37.600px;height:37.600px;border-radius:50%;background:#4fc3f7;border:1px solid rgba(103,119,239,.35)"></div>
<div class="t av" style="left:345px;top:706.1px;width:37.600px;text-align:center">LW</div>
<div class="t nm" style="left:392px;top:689.7px;letter-spacing:0.297px">Lawson Wordsmith</div>
<div class="t lk" style="left:392px;top:709.5px;letter-spacing:0.438px">260776025370</div>
<div class="t lk" style="left:392px;top:726.7px;letter-spacing:0.143px">lawsonwordsmith@gmail.com</div>
<div class="t zb" style="left:587.6px;top:697.7px;letter-spacing:0.547px">0</div>
<div class="t zs" style="left:588.4px;top:717.5px;letter-spacing:0.156px">0</div>
<div class="t zb" style="left:679.0px;top:697.7px;letter-spacing:0.547px">0</div>
<div class="t zs" style="left:679.7px;top:717.5px;letter-spacing:0.156px">0</div>
<div class="t zb" style="left:791.5px;top:697.7px;letter-spacing:0.547px">0</div>
<div class="t zs" style="left:792.3px;top:717.5px;letter-spacing:0.156px">0</div>
<div class="t zb" style="left:915.5px;top:697.7px;letter-spacing:0.547px">0</div>
<div class="t zs" style="left:916.3px;top:717.5px;letter-spacing:0.156px">0</div>
<div class="t td" style="left:1036.2px;top:707.9px;letter-spacing:0.312px">0</div>
<div class="t td" style="left:1237.4px;top:699.6px;letter-spacing:0.079px">6 Oct 2025 -</div>
<div class="t td" style="left:1255.9px;top:713.8px;letter-spacing:-0.006px">02:47</div>
<div class="t stt" style="left:1371.8px;top:689.7px;color:#47c363;letter-spacing:0.401px">Active</div>
<div class="t bg" style="left:1368.0px;top:709.5px;letter-spacing:-0.198px">(w/o Blue</div>
<div class="t bg" style="left:1373.2px;top:725.8px;letter-spacing:-0.393px">Badge)</div>
<svg style="left:1471px;top:707.6px" width="44" height="13" viewBox="0 0 44 13"><g fill="#6777ef"><circle cx="5.200" cy="3.100" r="3"/><path d="M0 11.400c0-3.300 1.900-4.900 5.200-4.900 1.100 0 2 .200 2.800.600-.300.700-.400 1.500-.200 2.400.300 1.300 1 2.200 2 2.900H.700c-.400 0-.700-.300-.700-.600z"/><path d="M11.300 5.800l3.400 1.200c0 2.800-1.300 4.700-3.400 5.700-2.100-1-3.400-2.900-3.400-5.700z"/><path d="M11.300 7.200v4.100c1.200-.700 1.900-1.800 2.100-3.400z" fill="#fff"/><path d="M18.300 2.200h5.800l-1.700 1.700h-3.400v6.400h6.400V7.500l1.700-1.700v5.200c0 .600-.500 1.100-1.100 1.100h-7.700c-.600 0-1.100-.500-1.100-1.100V3.300c0-.600.500-1.100 1.100-1.100z"/><path d="M28.200.400c.400-.400 1.100-.400 1.500 0l.800.800c.400.400.400 1.100 0 1.500l-.900.900-2.300-2.300zM26.500 2.100l2.300 2.300-4.700 4.700-2.700.400.400-2.700z"/></g><path d="M34.300 2.400l7 7m0-7l-7 7" stroke="#6777ef" stroke-width="2.400" fill="none"/></svg>
<div class="t td" style="left:275px;top:758.9px;letter-spacing:0.422px">1124</div>
<div style="left:345px;top:746.6px;width:37.600px;height:37.600px;border-radius:50%;background:#ff7043;border:1px solid rgba(103,119,239,.35)"></div>
<div class="t av" style="left:345px;top:757.1px;width:37.600px;text-align:center">DC</div>
<div class="t nm" style="left:392px;top:748.7px;letter-spacing:0.188px">Daniel Chinanda</div>
<div class="t lk" style="left:392px;top:769.0px;letter-spacing:-0.020px">chinandad@gmail.com</div>
<div class="t zb" style="left:587.6px;top:748.7px;letter-spacing:0.547px">0</div>
<div class="t zs" style="left:588.4px;top:768.5px;letter-spacing:0.156px">0</div>
<div class="t zb" style="left:679.0px;top:748.7px;letter-spacing:0.547px">0</div>
<div class="t zs" style="left:679.7px;top:768.5px;letter-spacing:0.156px">0</div>
<div class="t zb" style="left:791.5px;top:748.7px;letter-spacing:0.547px">0</div>
<div class="t zs" style="left:792.3px;top:768.5px;letter-spacing:0.156px">0</div>
<div class="t zb" style="left:915.5px;top:748.7px;letter-spacing:0.547px">0</div>
<div class="t zs" style="left:916.3px;top:768.5px;letter-spacing:0.156px">0</div>
<div class="t td" style="left:1036.2px;top:758.9px;letter-spacing:0.312px">0</div>
<div class="t td" style="left:1237.4px;top:750.6px;letter-spacing:0.079px">2 Oct 2025 -</div>
<div class="t td" style="left:1255.9px;top:764.8px;letter-spacing:-0.006px">16:29</div>
<div class="t stt" style="left:1371.8px;top:740.7px;color:#47c363;letter-spacing:0.401px">Active</div>
<div class="t bg" style="left:1368.0px;top:760.5px;letter-spacing:-0.198px">(w/o Blue</div>
<div class="t bg" style="left:1373.2px;top:776.8px;letter-spacing:-0.393px">Badge)</div>
<svg style="left:1471px;top:758.6px" width="44" height="13" viewBox="0 0 44 13"><g fill="#6777ef"><circle cx="5.200" cy="3.100" r="3"/><path d="M0 11.400c0-3.300 1.900-4.900 5.200-4.900 1.100 0 2 .200 2.800.600-.300.700-.400 1.500-.200 2.400.300 1.300 1 2.200 2 2.900H.700c-.400 0-.700-.300-.700-.600z"/><path d="M11.300 5.800l3.400 1.200c0 2.800-1.300 4.700-3.400 5.700-2.100-1-3.400-2.900-3.400-5.700z"/><path d="M11.300 7.200v4.100c1.200-.700 1.900-1.800 2.100-3.400z" fill="#fff"/><path d="M18.300 2.200h5.800l-1.700 1.700h-3.400v6.400h6.400V7.500l1.700-1.700v5.200c0 .600-.500 1.100-1.100 1.100h-7.700c-.600 0-1.100-.500-1.100-1.100V3.300c0-.600.500-1.100 1.100-1.100z"/><path d="M28.200.400c.400-.400 1.100-.400 1.500 0l.800.800c.400.400.400 1.100 0 1.500l-.900.900-2.300-2.300zM26.500 2.100l2.300 2.300-4.700 4.700-2.700.400.400-2.700z"/></g><path d="M34.300 2.400l7 7m0-7l-7 7" stroke="#6777ef" stroke-width="2.400" fill="none"/></svg>
<div class="t td" style="left:275px;top:809.9px;letter-spacing:0.422px">1122</div>
<div style="left:345px;top:797.6px;width:37.600px;height:37.600px;border-radius:50%;background:#cddc39;border:1px solid rgba(103,119,239,.35)"></div>
<div class="t av" style="left:345px;top:808.1px;width:37.600px;text-align:center">BS</div>
<div class="t nm" style="left:392px;top:791.7px;letter-spacing:0.138px">bskwPNXyTBJXY</div>
<div class="t lk" style="left:392px;top:811.5px;letter-spacing:0.438px">19950355022</div>
<div class="t lk" style="left:392px;top:828.7px;letter-spacing:0.009px">picuyas375@gmail.com</div>
<div class="t zb" style="left:587.6px;top:799.7px;letter-spacing:0.547px">0</div>
<div class="t zs" style="left:588.4px;top:819.5px;letter-spacing:0.156px">0</div>
<div class="t zb" style="left:679.0px;top:799.7px;letter-spacing:0.547px">0</div>
<div class="t zs" style="left:679.7px;top:819.5px;letter-spacing:0.156px">0</div>
<div class="t zb" style="left:791.5px;top:799.7px;letter-spacing:0.547px">0</div>
<div class="t zs" style="left:792.3px;top:819.5px;letter-spacing:0.156px">0</div>
<div class="t zb" style="left:915.5px;top:799.7px;letter-spacing:0.547px">0</div>
<div class="t zs" style="left:916.3px;top:819.5px;letter-spacing:0.156px">0</div>
<div class="t td" style="left:1036.2px;top:809.9px;letter-spacing:0.312px">0</div>
<div class="t td" style="left:1237.4px;top:801.6px;letter-spacing:0.079px">2 Oct 2025 -</div>
<div class="t td" style="left:1256.4px;top:815.8px;letter-spacing:-0.206px">01:14</div>
<div class="t stt" style="left:1366.8px;top:791.7px;color:#ffa426;letter-spacing:0.335px">Pending</div>
<div class="t bg" style="left:1368.0px;top:811.5px;letter-spacing:-0.198px">(w/o Blue</div>
<div class="t bg" style="left:1373.2px;top:827.8px;letter-spacing:-0.393px">Badge)</div>
<svg style="left:1471px;top:809.6px" width="44" height="13" viewBox="0 0 44 13"><g fill="#6777ef"><circle cx="5.200" cy="3.100" r="3"/><path d="M0 11.400c0-3.300 1.900-4.900 5.200-4.900 1.100 0 2 .200 2.800.600-.300.700-.400 1.500-.200 2.400.300 1.300 1 2.200 2 2.900H.700c-.400 0-.700-.300-.700-.600z"/><path d="M11.300 5.800l3.400 1.200c0 2.800-1.300 4.700-3.400 5.700-2.100-1-3.400-2.900-3.400-5.700z"/><path d="M11.300 7.200v4.100c1.200-.700 1.900-1.800 2.100-3.400z" fill="#fff"/><path d="M18.300 2.200h5.800l-1.700 1.700h-3.400v6.400h6.400V7.500l1.700-1.700v5.200c0 .600-.500 1.100-1.100 1.100h-7.700c-.600 0-1.100-.500-1.100-1.100V3.300c0-.600.500-1.100 1.100-1.100z"/><path d="M28.200.400c.400-.400 1.100-.400 1.500 0l.800.800c.400.400.400 1.100 0 1.500l-.900.900-2.300-2.300zM26.500 2.100l2.300 2.300-4.700 4.700-2.700.400.400-2.700z"/></g><path d="M34.300 2.400l7 7m0-7l-7 7" stroke="#6777ef" stroke-width="2.400" fill="none"/></svg>
<div class="t td" style="left:275px;top:860.9px;letter-spacing:0.645px">1115</div>
<div style="left:345px;top:848.6px;width:37.600px;height:37.600px;border-radius:50%;background:#ff9e80;border:1px solid rgba(103,119,239,.35)"></div>
<div class="t av" style="left:345px;top:859.1px;width:37.600px;text-align:center">RL</div>
<div class="t nm" style="left:392px;top:842.7px;letter-spacing:0.242px">Raphael Victor Luswili</div>
<div class="t lk" style="left:392px;top:862.5px;letter-spacing:0.417px">+260973665232</div>
<div class="t lk" style="left:392px;top:879.7px;letter-spacing:0.134px">beautyluswili@gmail.com</div>
<div class="t zb" style="left:587.6px;top:850.7px;letter-spacing:0.547px">0</div>
<div class="t zs" style="left:588.4px;top:870.5px;letter-spacing:0.156px">0</div>
<div class="t zb" style="left:679.0px;top:850.7px;letter-spacing:0.547px">0</div>
<div class="t zs" style="left:679.7px;top:870.5px;letter-spacing:0.156px">0</div>
<div class="t zb" style="left:791.5px;top:850.7px;letter-spacing:0.547px">0</div>
<div class="t zs" style="left:792.3px;top:870.5px;letter-spacing:0.156px">0</div>
<div class="t zb" style="left:915.5px;top:850.7px;letter-spacing:0.547px">0</div>
<div class="t zs" style="left:916.3px;top:870.5px;letter-spacing:0.156px">0</div>
<div class="t td" style="left:1036.2px;top:860.9px;letter-spacing:0.312px">0</div>
<div class="t td" style="left:1233.4px;top:852.6px;letter-spacing:-0.031px">17 Sep 2025 -</div>
<div class="t td" style="left:1256.2px;top:866.8px;letter-spacing:-0.106px">05:15</div>
<div class="t stt" style="left:1371.8px;top:842.7px;color:#47c363;letter-spacing:0.401px">Active</div>
<div class="t bg" style="left:1368.0px;top:862.5px;letter-spacing:-0.198px">(w/o Blue</div>
<div class="t bg" style="left:1373.2px;top:878.8px;letter-spacing:-0.393px">Badge)</div>
<svg style="left:1471px;top:860.6px" width="44" height="13" viewBox="0 0 44 13"><g fill="#6777ef"><circle cx="5.200" cy="3.100" r="3"/><path d="M0 11.400c0-3.300 1.900-4.900 5.200-4.900 1.100 0 2 .200 2.800.600-.300.700-.400 1.500-.200 2.400.300 1.300 1 2.200 2 2.900H.700c-.400 0-.700-.300-.700-.600z"/><path d="M11.300 5.800l3.400 1.200c0 2.800-1.300 4.700-3.400 5.700-2.100-1-3.400-2.900-3.400-5.700z"/><path d="M11.300 7.200v4.100c1.200-.700 1.900-1.800 2.100-3.400z" fill="#fff"/><path d="M18.300 2.200h5.800l-1.700 1.700h-3.400v6.400h6.400V7.500l1.700-1.700v5.200c0 .600-.500 1.100-1.100 1.100h-7.700c-.600 0-1.100-.500-1.100-1.100V3.300c0-.600.500-1.100 1.100-1.100z"/><path d="M28.200.400c.400-.400 1.100-.400 1.500 0l.800.800c.400.400.400 1.100 0 1.500l-.900.900-2.300-2.300zM26.500 2.100l2.300 2.300-4.700 4.700-2.700.400.400-2.700z"/></g><path d="M34.300 2.400l7 7m0-7l-7 7" stroke="#6777ef" stroke-width="2.400" fill="none"/></svg>
<div class="t nm" style="left:392px;top:893.5px;letter-spacing:0.263px">Victor Luswili</div>
<div class="t stt" style="left:1371.8px;top:893.5px;color:#47c363;letter-spacing:0.401px">Active</div>
<div style="left:345px;top:899px;width:37.600px;height:37.600px;border-radius:50%;background:#8c9eff"></div>

</div>

</div>
</body>
</html>
